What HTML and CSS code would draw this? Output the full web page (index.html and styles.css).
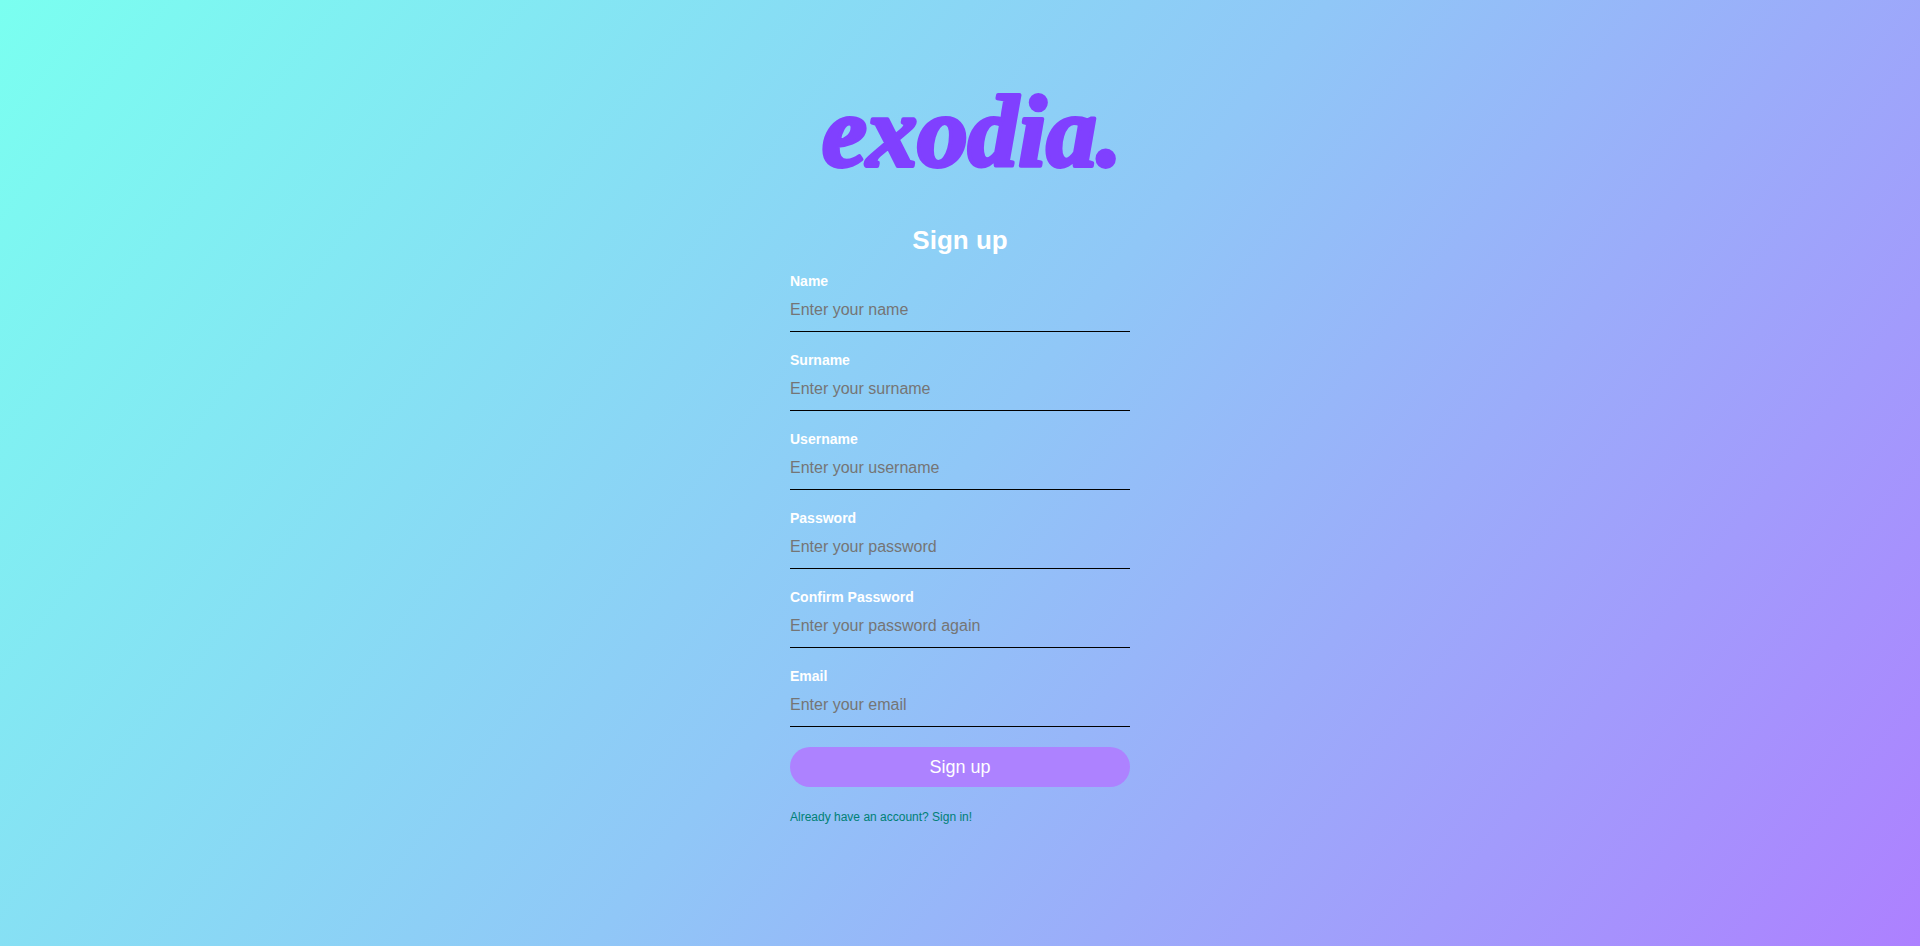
FILE: index.html
```html
<!DOCTYPE html>
<html lang="en">
<head>
<meta charset="utf-8">
<title>exodia. | Sign up</title>
<meta name="viewport" content="width=device-width, initial-scale=1">
<link rel="stylesheet" href="styles.css">
</head>
<body>
<main class="signup">
  <svg class="logo" viewBox="0 0 340 110" role="img" aria-label="exodia.">
    <text class="logo-text" x="182" y="86" text-anchor="middle">exodia.</text>
  </svg>
  <h1 class="title">Sign up</h1>
  <form class="form">
    <div class="field">
      <label class="label" for="name">Name</label>
      <input class="input" id="name" type="text" placeholder="Enter your name">
    </div>
    <div class="field">
      <label class="label" for="surname">Surname</label>
      <input class="input" id="surname" type="text" placeholder="Enter your surname">
    </div>
    <div class="field">
      <label class="label" for="username">Username</label>
      <input class="input" id="username" type="text" placeholder="Enter your username">
    </div>
    <div class="field">
      <label class="label" for="password">Password</label>
      <input class="input" id="password" type="password" placeholder="Enter your password">
    </div>
    <div class="field">
      <label class="label" for="confirm">Confirm Password</label>
      <input class="input" id="confirm" type="password" placeholder="Enter your password again">
    </div>
    <div class="field">
      <label class="label" for="email">Email</label>
      <input class="input" id="email" type="email" placeholder="Enter your email">
    </div>
    <button class="submit" type="submit">Sign up</button>
  </form>
  <a class="signin" href="#">Already have an account? Sign in!</a>
</main>
</body>
</html>
```
FILE: styles.css
```css
* {
  box-sizing: border-box;
}

body {
  margin: 0;
  min-height: 100vh;
  padding: 80px 16px;
  font-family: "Liberation Sans", Arial, sans-serif;
  background: linear-gradient(128deg, #7afff0, #90c7f7, #ad80ff);
}

.signup {
  display: flex;
  flex-direction: column;
  max-width: 340px;
  margin: 0 auto;
}

.logo {
  display: block;
  width: 100%;
  overflow: visible;
}

.logo-text {
  font: italic bold 101px "Liberation Serif", serif;
  fill: #8040ff;
  stroke: #8040ff;
  stroke-width: 4px;
  stroke-linejoin: round;
}

.title {
  margin: 35px 0 18px;
  font-size: 26px;
  line-height: 30px;
  text-align: center;
  color: #fff;
}

.form {
  display: flex;
  flex-direction: column;
  gap: 20px;
}

.field {
  display: flex;
  flex-direction: column;
}

.label {
  font-size: 14px;
  font-weight: bold;
  line-height: 16px;
  color: #fff;
}

.input {
  width: 100%;
  padding: 12px 0;
  border: 0;
  border-bottom: 1px solid #000;
  font: 16px/18px "Liberation Sans", Arial, sans-serif;
  background: transparent;
  outline: none;
}

.input::placeholder {
  color: #757575;
}

.submit {
  height: 40px;
  border: 0;
  border-radius: 20px;
  font: 18px "Liberation Sans", Arial, sans-serif;
  color: #fff;
  background: #ad82ff;
  cursor: pointer;
}

.signin {
  align-self: flex-start;
  margin-top: 22px;
  font-size: 12px;
  line-height: 16px;
  color: #008075;
  text-decoration: none;
}
```
